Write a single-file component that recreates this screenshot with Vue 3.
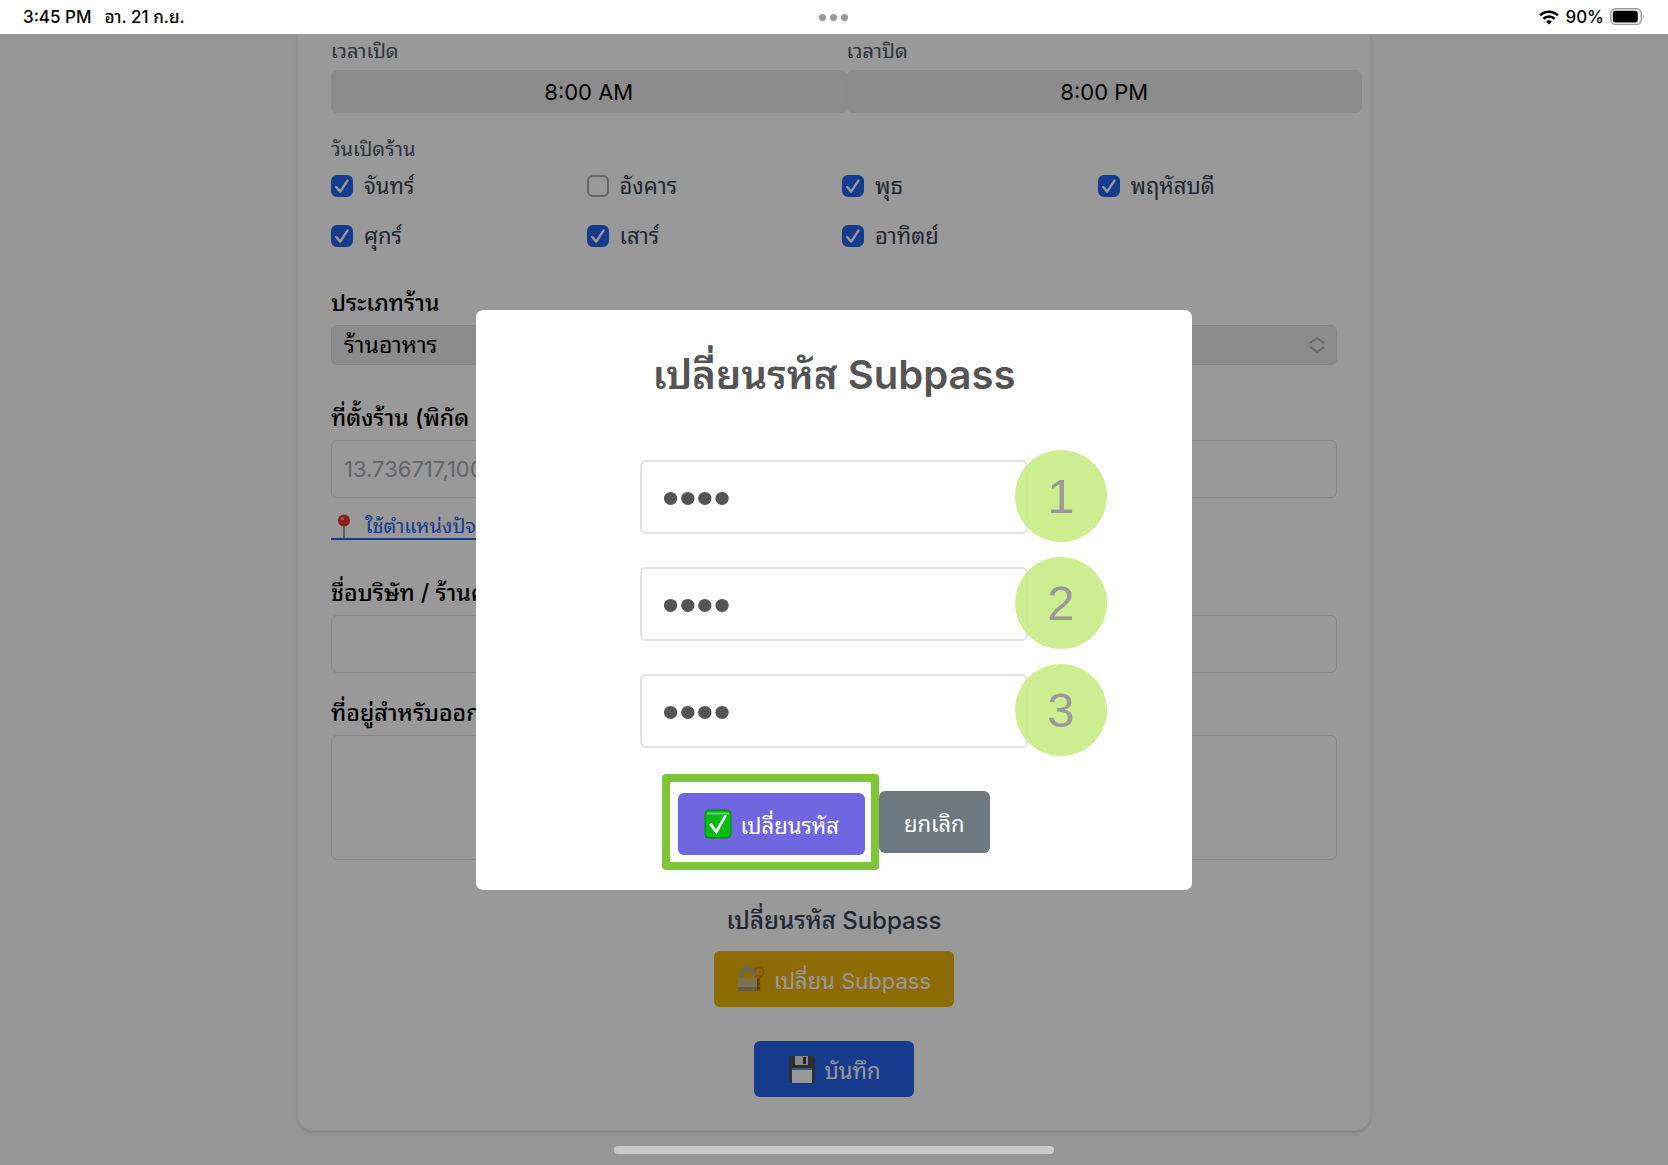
<script setup>
import { ref } from 'vue'

const openTime = ref('8:00 AM')
const closeTime = ref('8:00 PM')
const shopType = ref('ร้านอาหาร')
const location = ref('')
const company = ref('')
const address = ref('')

const days = ref([
  { name: 'จันทร์', open: true },
  { name: 'อังคาร', open: false },
  { name: 'พุธ', open: true },
  { name: 'พฤหัสบดี', open: true },
  { name: 'ศุกร์', open: true },
  { name: 'เสาร์', open: true },
  { name: 'อาทิตย์', open: true },
])

// the three boxes of the dialog: old, new, new again
const codes = ref(['1234', '1234', '1234'])
const showDialog = ref(true)
</script>

<template>
  <div class="screen">
    <header class="status">
      <div class="status__side status__side--left">
        <span>3:45 PM</span>
        <span>อา. 21 ก.ย.</span>
      </div>
      <div class="status__dots"><i></i><i></i><i></i></div>
      <div class="status__side status__side--right">
        <svg width="20" height="15" viewBox="0 0 20 15" fill="none" stroke="#000" stroke-width="2.6">
          <path d="M1.2 5.4a12.6 12.6 0 0 1 17.6 0" />
          <path d="M4.4 8.8a8 8 0 0 1 11.2 0" />
          <path d="M10 14.6l-2.8-2.9a4 4 0 0 1 5.6 0z" fill="#000" stroke="none" />
        </svg>
        <span>90%</span>
        <svg width="34" height="18" viewBox="0 0 34 18">
          <rect x="0.8" y="0.8" width="30.4" height="15.6" rx="4.6" fill="none" stroke="#9a9a9a" stroke-width="1.4" />
          <rect x="2.8" y="2.8" width="25" height="11.6" rx="2.6" fill="#000" />
          <path d="M32.6 6v5.4c1.4-.6 1.4-4.8 0-5.4z" fill="#9a9a9a" />
        </svg>
      </div>
    </header>

    <main class="page">
      <form class="card" @submit.prevent>
        <div class="times">
          <div>
            <label class="label label--small" for="open">เวลาเปิด</label>
            <input id="open" v-model="openTime" class="time" type="text">
          </div>
          <div>
            <label class="label label--small" for="close">เวลาปิด</label>
            <input id="close" v-model="closeTime" class="time" type="text">
          </div>
        </div>

        <fieldset class="days">
          <legend class="label label--small">วันเปิดร้าน</legend>
          <div class="days__grid">
            <label v-for="day in days" :key="day.name" class="day">
              <input v-model="day.open" class="day__box" type="checkbox">
              <svg class="day__tick" viewBox="0 0 22 22" fill="none" stroke="#fff" stroke-width="2.4" stroke-linecap="round" stroke-linejoin="round">
                <path d="M5.2 12l4 4.6 7.4-11.2" />
              </svg>
              <span>{{ day.name }}</span>
            </label>
          </div>
        </fieldset>

        <div class="field">
          <label class="label" for="type">ประเภทร้าน</label>
          <div class="select">
            <select id="type" v-model="shopType" class="select__box">
              <option>ร้านอาหาร</option>
            </select>
            <svg class="select__arrow" viewBox="0 0 16 16" fill="none" stroke="#b4b4b8" stroke-width="2" stroke-linecap="round" stroke-linejoin="round">
              <path d="M1.5 5.6L8 1.2 14.5 5.6M1.5 10.4L8 14.8 14.5 10.4" />
            </svg>
          </div>
        </div>

        <div class="field">
          <label class="label" for="location">ที่ตั้งร้าน (พิกัด GPS)</label>
          <input id="location" v-model="location" class="input" type="text" placeholder="13.736717,100.523186">
          <a class="pin" href="#">
            <svg class="pin__icon" viewBox="0 0 26 24">
              <path d="M13 11v12" stroke="#9aa0a6" stroke-width="2" stroke-linecap="round" />
              <circle cx="13" cy="6.5" r="6" fill="#e3342f" />
              <circle cx="11.5" cy="4.8" r="1.8" fill="#ff8a80" />
            </svg>
            ใช้ตำแหน่งปัจจุบัน
          </a>
        </div>

        <div class="field">
          <label class="label" for="company">ชื่อบริษัท / ร้านค้า</label>
          <input id="company" v-model="company" class="input" type="text">
        </div>

        <div class="field field--address">
          <label class="label" for="address">ที่อยู่สำหรับออกใบกำกับภาษี</label>
          <textarea id="address" v-model="address" class="input input--area"></textarea>
        </div>

        <div class="actions">
          <h3 class="actions__title">เปลี่ยนรหัส Subpass</h3>
          <button class="btn btn--yellow" type="button" @click="showDialog = true">
            <svg class="btn__icon" viewBox="0 0 28 28">
              <circle cx="22" cy="7" r="4.5" fill="none" stroke="#d98a10" stroke-width="2" />
              <path d="M22 11.5V26" stroke="#d98a10" stroke-width="2.5" />
              <path d="M4.5 14V9.5a6.5 6.5 0 0 1 13 0V11" fill="none" stroke="#a9adb2" stroke-width="2.8" />
              <rect x="1" y="13" width="19" height="13" rx="1.5" fill="#cbbd86" />
              <rect x="1" y="22" width="19" height="4" rx="1.5" fill="#a3986a" />
              <path d="M20 13l3 2-2 2 2 2-2 2 2 2-3 3z" fill="#8a5f0c" />
            </svg>
            เปลี่ยน Subpass
          </button>
          <button class="btn btn--blue" type="submit">
            <svg class="btn__icon" viewBox="0 0 28 28">
              <path d="M1 1h24l2 2v25H1z" fill="#4a4d54" />
              <path d="M7 1h13v9H7z" fill="#e4e4e4" />
              <path d="M15 2h3v7h-3z" fill="#3d4047" />
              <path d="M4 13h20v15H4z" fill="#fff" />
              <path d="M4 13h20v2H4z" fill="#5b9bd5" />
            </svg>
            บันทึก
          </button>
        </div>
      </form>

      <div v-if="showDialog" class="overlay">
        <div class="dialog" role="dialog" aria-labelledby="dialog-title">
          <h2 id="dialog-title" class="dialog__title">เปลี่ยนรหัส Subpass</h2>
          <div class="codes">
            <label v-for="(code, i) in codes" :key="i" class="code">
              <input v-model="codes[i]" class="code__input" type="password">
              <span class="code__badge">{{ i + 1 }}</span>
            </label>
          </div>
          <div class="dialog__buttons">
            <div class="highlight">
              <button class="swal swal--ok" type="button">
                <svg class="swal__icon" viewBox="0 0 28 30">
                  <rect x="0.5" y="0.5" width="27" height="29" rx="4.5" fill="#078a16" />
                  <rect x="1.5" y="2" width="25" height="26" rx="3.5" fill="#05bd12" />
                  <path d="M3 3.5h22v2H3z" fill="#5fd466" />
                  <path d="M5 15.5l2.5-1.5 4.5 6.5L20.500 6l2.500.5L12.500 25.500z" fill="#fff" />
                </svg>
                เปลี่ยนรหัส
              </button>
            </div>
            <button class="swal swal--cancel" type="button" @click="showDialog = false">ยกเลิก</button>
          </div>
        </div>
      </div>
      <div class="home"></div>
    </main>
  </div>
</template>

<style>
body {
  margin: 0;
}
</style>

<style scoped>
.screen {
  display: flex;
  flex-direction: column;
  min-height: 100vh;
  font-family: Inter, "Noto Sans Thai Looped", "Noto Sans Thai", "Liberation Sans", sans-serif;
  font-size: 22px;
  color: #000;
}
.screen * {
  box-sizing: border-box;
}
input,
select,
textarea,
button {
  font: inherit;
  color: inherit;
}

/* status bar */
.status {
  display: grid;
  grid-template-columns: 1fr auto 1fr;
  align-items: center;
  height: 34px;
  padding: 0 24px 0 23px;
  background: #fff;
  font-size: 17px;
  line-height: 24px;
  font-weight: 500;
}
.status__side {
  display: flex;
  align-items: center;
}
.status__side--left {
  align-items: baseline;
  gap: 13px;
}
.status__side--right {
  justify-content: flex-end;
  gap: 6px;
}
.status__dots {
  display: flex;
  gap: 4px;
}
.status__dots i {
  width: 7px;
  height: 7px;
  border-radius: 50%;
  background: #999;
}

/* form */
.page {
  position: relative;
  flex: 1;
  padding-bottom: 32px;
  background: #fafafa;
}
.card {
  max-width: 1074px;
  margin: 0 auto;
  padding: 3px 33px 33px;
  background: #fff;
  border: 1px solid #eceef2;
  border-top: 0;
  border-radius: 0 0 16px 16px;
  box-shadow: 0 2px 3px rgba(0, 0, 40, 0.12);
}
.label {
  display: block;
  margin-bottom: 8px;
  padding: 0;
  line-height: 28px;
  font-size: 23px;
  font-weight: 500;
}
.label--small {
  font-size: 20px;
  font-weight: 400;
  color: #4b5563;
}
.times {
  display: grid;
  grid-template-columns: 1fr 1fr;
  margin-right: -25px;
}
.times .label {
  margin-bottom: 5px;
}
.time {
  display: block;
  width: 100%;
  height: 43px;
  padding: 0;
  border: 1px solid #e6e6ea;
  border-radius: 6px;
  background: #e9e9eb;
  text-align: center;
}
.days {
  margin: 22px 0 0;
  padding: 0;
  border: 0;
}
.days .label--small {
  margin-bottom: 9px;
}
.days__grid {
  display: grid;
  grid-template-columns: repeat(4, 1fr);
  gap: 22px 16px;
}
.day {
  position: relative;
  display: flex;
  align-items: center;
  gap: 11px;
  line-height: 28px;
  color: #374151;
}
.day__box {
  appearance: none;
  width: 22px;
  height: 22px;
  margin: 0;
  border: 2px solid #a8a8ab;
  border-radius: 6px;
  background: #fff;
}
.day__box:checked {
  border-color: #2563eb;
  background: #2563eb;
}
.day__tick {
  position: absolute;
  left: 0;
  width: 22px;
  height: 22px;
  visibility: hidden;
  pointer-events: none;
}
.day__box:checked + .day__tick {
  visibility: visible;
}
.field {
  margin-top: 39px;
}
.field--address {
  margin-top: 26px;
}
.select {
  position: relative;
}
.select__box {
  display: block;
  appearance: none;
  width: 100%;
  height: 40px;
  padding: 0 12px;
  border: 1px solid #dcdee4;
  border-radius: 6px;
  background: #e9e9eb;
  font-size: 23px;
}
.select__arrow {
  position: absolute;
  top: 12px;
  right: 12px;
  width: 16px;
  height: 16px;
}
.input {
  display: block;
  width: 100%;
  height: 58px;
  padding: 0 12px;
  border: 1px solid #dfe1e6;
  border-radius: 6px;
  background: #fff;
}
.input::placeholder {
  color: #a4a8b0;
}
.input--area {
  height: 125px;
  resize: none;
}
.pin {
  display: flex;
  align-items: center;
  width: fit-content;
  margin-top: 16px;
  border-bottom: 2px solid #2563eb;
  line-height: 24px;
  font-size: 20px;
  color: #2563eb;
  text-decoration: none;
}
.pin__icon {
  width: 26px;
  height: 24px;
  margin-right: 8px;
}
.actions {
  display: flex;
  flex-direction: column;
  align-items: center;
  margin-top: 47px;
}
.actions__title {
  margin: 0 0 16px;
  line-height: 28px;
  font-size: 24px;
  font-weight: 500;
  color: #374151;
}
.btn {
  display: flex;
  align-items: center;
  gap: 9px;
  height: 56px;
  padding: 0 23px;
  border: 0;
  border-radius: 6px;
  color: #fff;
}
.btn--yellow {
  background: #eab308;
}
.btn--blue {
  margin-top: 34px;
  padding: 0 34px;
  background: #2563eb;
}
.btn__icon {
  width: 28px;
  height: 28px;
}

/* dialog */
.overlay {
  position: absolute;
  inset: 0;
  display: flex;
  align-items: center;
  justify-content: center;
  background: rgba(0, 0, 0, 0.4);
}
.dialog {
  width: 716px;
  max-width: 100%;
  padding: 32px 28px 20px;
  border-radius: 7px;
  background: #fff;
}
.dialog__title {
  margin: 0 0 52px;
  line-height: 66px;
  font-size: 40px;
  font-weight: 600;
  text-align: center;
  color: #545454;
}
.codes {
  display: flex;
  flex-direction: column;
  align-items: center;
  gap: 33px;
}
.code {
  position: relative;
  width: 388px;
}
.code__input {
  display: block;
  width: 100%;
  height: 74px;
  padding: 0 20px;
  border: 2px solid #e2e2e2;
  border-radius: 6px;
  background: #fff;
  font-family: "Liberation Sans", Arial, sans-serif;
  font-size: 49px;
  color: #545454;
}
.code__badge {
  position: absolute;
  top: -10px;
  right: -79px;
  width: 92px;
  height: 92px;
  border-radius: 50%;
  background: rgba(199, 236, 132, 0.9);
  font-family: "Liberation Sans", Arial, sans-serif;
  font-size: 49px;
  line-height: 92px;
  text-align: center;
  color: #999;
}
.dialog__buttons {
  display: flex;
  align-items: center;
  justify-content: center;
  margin-top: 26px;
  padding-right: 16px;
}
.highlight {
  padding: 11px 6px 7px 8px;
  border: 8px solid #7fc637;
  border-radius: 4px;
}
.swal {
  display: flex;
  align-items: center;
  gap: 8px;
  height: 62px;
  padding: 0 25px;
  border: 0;
  border-radius: 6px;
  color: #fff;
}
.swal--ok {
  padding: 0 26px;
  background: #7066e0;
}
.swal--cancel {
  background: #6e7881;
}
.swal__icon {
  width: 28px;
  height: 30px;
}
.home {
  position: absolute;
  bottom: 11px;
  left: 50%;
  width: 440px;
  height: 8px;
  margin-left: -220px;
  border-radius: 4px;
  background: #c9c9c9;
}
</style>
